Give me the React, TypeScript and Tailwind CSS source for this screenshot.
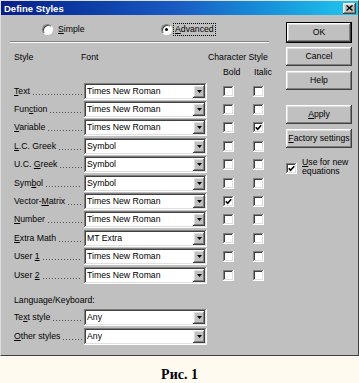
import type { ReactNode } from 'react'

const raised =
  'shadow-[inset_-1px_-1px_#404040,inset_1px_1px_#ffffff,inset_-2px_-2px_#808080,inset_2px_2px_#dfdfdf]'
const sunken =
  'shadow-[inset_-1px_-1px_#ffffff,inset_1px_1px_#808080,inset_-2px_-2px_#dfdfdf,inset_2px_2px_#404040]'

const STYLES = [
  { label: 'Text', u: 0, font: 'Times New Roman' },
  { label: 'Function', u: 3, font: 'Times New Roman' },
  { label: 'Variable', u: 0, font: 'Times New Roman', italic: true },
  { label: 'L.C. Greek', u: 0, font: 'Symbol' },
  { label: 'U.C. Greek', u: 5, font: 'Symbol' },
  { label: 'Symbol', u: 3, font: 'Symbol' },
  { label: 'Vector-Matrix', u: 7, font: 'Times New Roman', bold: true },
  { label: 'Number', u: 0, font: 'Times New Roman' },
  { label: 'Extra Math', u: 0, font: 'MT Extra' },
  { label: 'User 1', u: 5, font: 'Times New Roman' },
  { label: 'User 2', u: 5, font: 'Times New Roman' },
]

// text with an underlined access key
function Mn({ t, i }: { t: string; i: number }) {
  return (
    <>
      {t.slice(0, i)}
      <span className="underline underline-offset-1">{t[i]}</span>
      {t.slice(i + 1)}
    </>
  )
}

function Label({ t, i }: { t: string; i: number }) {
  return (
    <div className="flex w-[70px] items-center pr-[2px]">
      <span className="whitespace-nowrap">
        <Mn t={t} i={i} />
      </span>
      {/* dotted leader */}
      <div className="ml-[3px] mt-[6px] h-[1px] flex-1 bg-[linear-gradient(to_right,#505050_1px,transparent_1px)] bg-[length:3px_1px] bg-repeat-x" />
    </div>
  )
}

function Combo({ value }: { value: string }) {
  return (
    <div className={`flex h-[17px] w-[123px] items-center bg-white pl-[3px] pr-[2px] ${sunken}`}>
      <span className="flex-1 whitespace-nowrap">{value}</span>
      <div className={`flex h-[13px] w-[12px] items-center justify-center bg-[#c0c0c0] ${raised}`}>
        <svg width="5" height="3" viewBox="0 0 5 3">
          <path d="M0 0H5L2.5 3Z" fill="#000" />
        </svg>
      </div>
    </div>
  )
}

function Check({ on }: { on?: boolean }) {
  return (
    <div className={`flex h-[11px] w-[11px] shrink-0 items-center justify-center bg-white ${sunken}`}>
      {on && (
        <svg width="7" height="7" viewBox="0 0 7 7">
          <polyline points="0.8,3.2 2.6,5.2 6.2,1.2" fill="none" stroke="#000" strokeWidth="1.6" />
        </svg>
      )}
    </div>
  )
}

function Radio({ on }: { on?: boolean }) {
  return (
    <div className="flex h-[11px] w-[11px] shrink-0 items-center justify-center rounded-full border border-t-[#808080] border-l-[#808080] border-b-white border-r-white bg-white shadow-[inset_1px_1px_#404040]">
      {on && <div className="h-[3px] w-[3px] rounded-full bg-black" />}
    </div>
  )
}

function Button({ children, def }: { children: ReactNode; def?: boolean }) {
  const face = (
    <div className={`flex h-[19px] w-full items-center justify-center bg-[#c0c0c0] ${raised}`}>
      {children}
    </div>
  )
  if (def) return <div className="w-[66px] border border-black">{face}</div>
  return <div className="w-[66px]">{face}</div>
}

export default function App() {
  return (
    <div className="flex h-[383px] w-[359px] flex-col bg-[#fffaf0] font-['Liberation_Sans',Arial,sans-serif] text-[8.7px] leading-[11px] text-black">
      <div className="h-[356px] w-[359px] border border-t-[#dfdfdf] border-l-[#dfdfdf] border-b-[#404040] border-r-[#404040] bg-[#c0c0c0]">
        {/* title bar */}
        <div className="flex h-[14px] items-center bg-linear-to-r from-[#081c8a] via-[#1a5cc4] to-[#22c8ee] pl-[3px] pr-[2px]">
          <span className="flex-1 text-[9.5px] font-bold text-white">Define Styles</span>
          <div className={`flex h-[11px] w-[13px] items-center justify-center bg-[#c0c0c0] ${raised}`}>
            <svg width="7" height="6" viewBox="0 0 7 6">
              <path d="M0.5 0.5L6.5 5.5M6.5 0.5L0.5 5.5" stroke="#000" strokeWidth="1.4" />
            </svg>
          </div>
        </div>

        <div className="flex">
          {/* left part */}
          <div className="w-[285px] pl-[13px]">
            <div className="mt-[7px] flex h-[14px] items-center pl-[28px]">
              <div className="flex w-[119px] items-center gap-[5px]">
                <Radio />
                <span>
                  <Mn t="Simple" i={0} />
                </span>
              </div>
              <div className="flex items-center gap-[1px]">
                <Radio on />
                <span className="border border-dotted border-black px-[1px] leading-[11px]">
                  <Mn t="Advanced" i={0} />
                </span>
              </div>
            </div>
            <div className="-ml-[4px] mt-[5px] h-[2px] w-[259px] border-t border-t-[#808080] border-b border-b-white" />

            <div className="mt-[9px] flex">
              <span className="w-[67px]">Style</span>
              <span className="w-[127px]">Font</span>
              <span>Character Style</span>
            </div>
            <div className="mt-[4px] flex">
              <span className="w-[209px]" />
              <span className="w-[31px]">Bold</span>
              <span>Italic</span>
            </div>

            <div className="mt-[4px]">
              {STYLES.map((s) => (
                <div key={s.label} className="flex h-[18.4px] items-center">
                  <Label t={s.label} i={s.u} />
                  <Combo value={s.font} />
                  <div className="ml-[16px]">
                    <Check on={s.bold} />
                  </div>
                  <div className="ml-[19px]">
                    <Check on={s.italic} />
                  </div>
                </div>
              ))}
            </div>

            <div className="mt-[10.5px]">Language/Keyboard:</div>
            <div className="mt-[2.4px]">
              <div className="flex h-[19px] items-center">
                <Label t="Text style" i={2} />
                <Combo value="Any" />
              </div>
              <div className="flex h-[19px] items-center">
                <Label t="Other styles" i={0} />
                <Combo value="Any" />
              </div>
            </div>
          </div>

          {/* right part */}
          <div className="flex w-[66px] flex-col pt-[7px]">
            <Button def>OK</Button>
            <div className="mt-[4px]">
              <Button>Cancel</Button>
            </div>
            <div className="mt-[5px]">
              <Button>Help</Button>
            </div>
            <div className="mt-[15px]">
              <Button>
                <Mn t="Apply" i={0} />
              </Button>
            </div>
            <div className="mt-[5px]">
              <Button>
                <span className="whitespace-nowrap">
                  <Mn t="Factory settings" i={0} />
                </span>
              </Button>
            </div>
            <div className="mt-[10px] flex items-start gap-[5px]">
              <div className="mt-[5px]">
                <Check on />
              </div>
              <div className="leading-[9px]">
                <Mn t="Use for new" i={0} />
                <br />
                equations
              </div>
            </div>
          </div>
        </div>
      </div>

      <div className="pt-[12px] text-center font-['Liberation_Serif','Times_New_Roman',serif] text-[14px] font-bold leading-[14px]">
        Рис. 1
      </div>
    </div>
  )
}
